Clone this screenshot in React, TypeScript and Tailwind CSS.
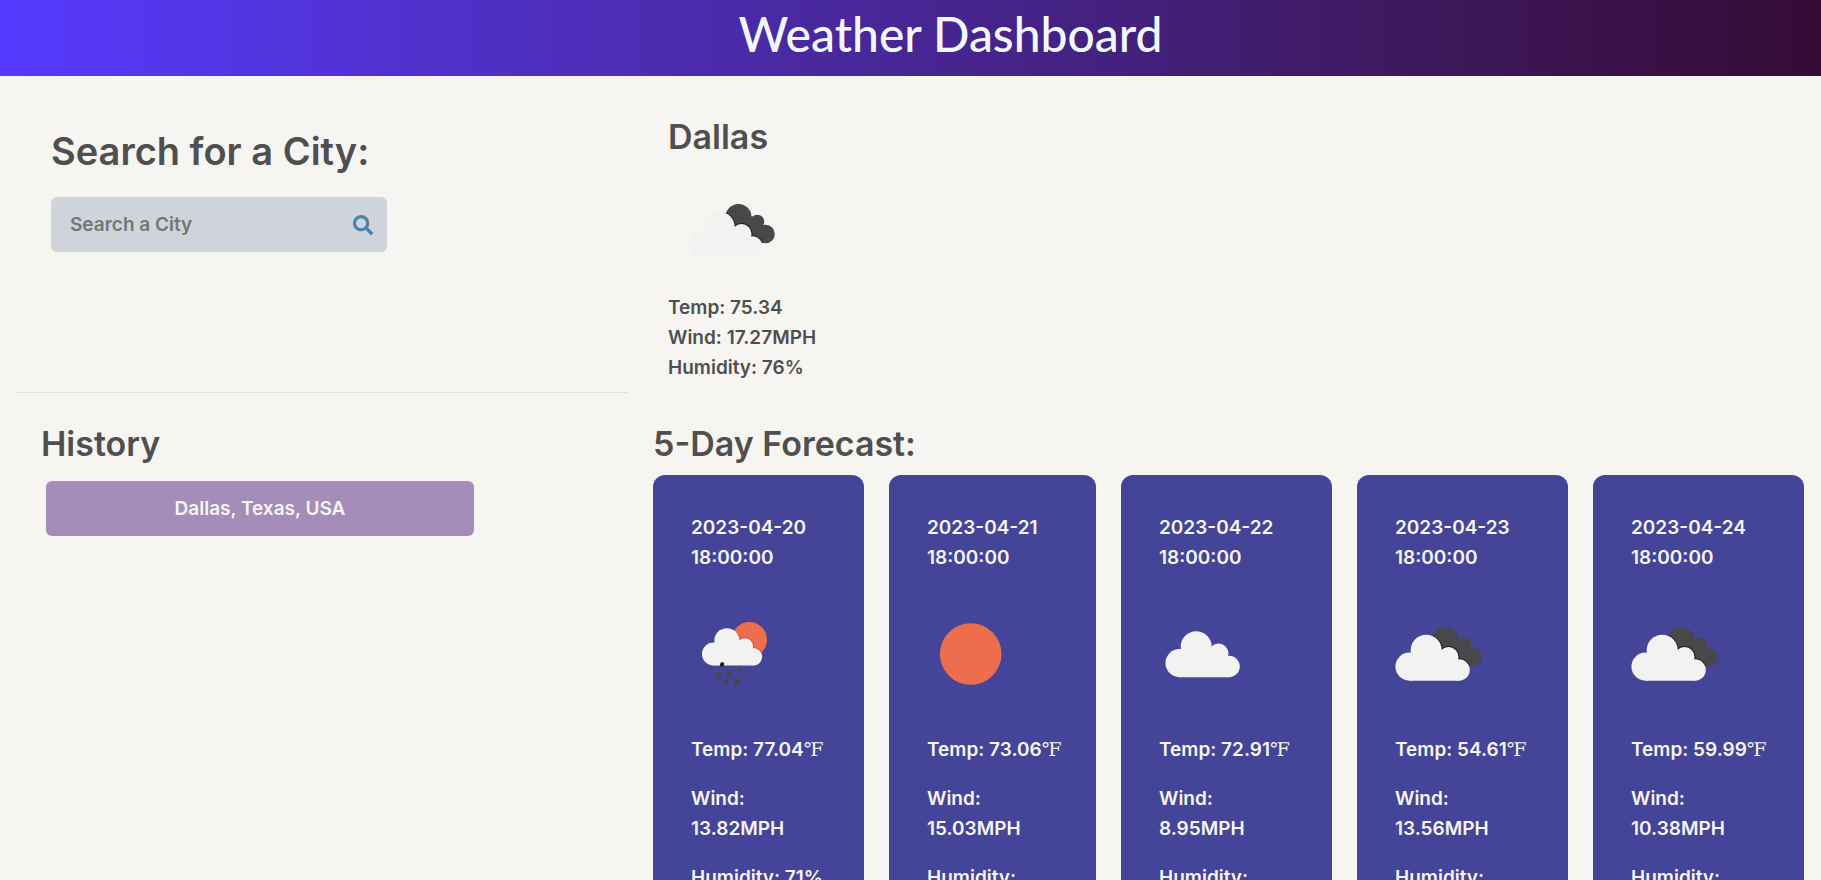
import { FaSearch } from "react-icons/fa";

type Sky = "rain" | "clear" | "cloud" | "broken";

interface Day {
  date: string;
  time: string;
  sky: Sky;
  temp: string;
  wind: string;
  humidity: string;
}

const DAYS: Day[] = [
  { date: "2023-04-20", time: "18:00:00", sky: "rain", temp: "77.04", wind: "13.82MPH", humidity: "71%" },
  { date: "2023-04-21", time: "18:00:00", sky: "clear", temp: "73.06", wind: "15.03MPH", humidity: "28%" },
  { date: "2023-04-22", time: "18:00:00", sky: "cloud", temp: "72.91", wind: "8.95MPH", humidity: "46%" },
  { date: "2023-04-23", time: "18:00:00", sky: "broken", temp: "54.61", wind: "13.56MPH", humidity: "40%" },
  { date: "2023-04-24", time: "18:00:00", sky: "broken", temp: "59.99", wind: "10.38MPH", humidity: "58%" },
];

function CloudShape() {
  return (
    <>
      <circle cx="31.2" cy="58.2" r="15.5" />
      <circle cx="14.5" cy="74.6" r="14.1" />
      <circle cx="53.5" cy="65" r="10" />
      <circle cx="64.1" cy="78" r="10.7" />
      <path d="M14.5 88.7V62H30l24 2 10 14v10.7z" />
    </>
  );
}

function BackCloudShape() {
  return (
    <>
      <circle cx="50.5" cy="48" r="13" />
      <circle cx="69.3" cy="52.7" r="7" />
      <circle cx="77.6" cy="65" r="9.2" />
      <path d="M42 56l18-9 9 1 9 15-3 11H58z" />
    </>
  );
}

function SkyIcon({ sky, id }: { sky: Sky; id: string }) {
  return (
    <svg viewBox="0 0 88 124" className="block h-[124px] w-[88px]" aria-hidden="true">
      {sky === "broken" && (
        <>
          <clipPath id={id}>
            <BackCloudShape />
          </clipPath>
          <g fill="#48484a">
            <BackCloudShape />
          </g>
          <g clipPath={`url(#${id})`} fill="#222224" stroke="#222224" strokeWidth="2">
            <CloudShape />
          </g>
          <g fill="#f2f2f1">
            <CloudShape />
          </g>
        </>
      )}
      {sky === "cloud" && (
        <g fill="#f2f2f1" transform="translate(6 -3.5)">
          <CloudShape />
        </g>
      )}
      {sky === "clear" && <circle cx="43.7" cy="62" r="30.8" fill="#ec6e4c" />}
      {sky === "rain" && (
        <>
          <clipPath id={id}>
            <circle cx="58.3" cy="47.7" r="17.7" />
          </clipPath>
          <circle cx="58.3" cy="47.7" r="17.7" fill="#ec6e4c" />
          <g clipPath={`url(#${id})`}>
            <g transform="translate(10.6 1.6) scale(.81)" fill="#e8452a" stroke="#e8452a" strokeWidth="2">
              <CloudShape />
            </g>
          </g>
          <g transform="translate(10.6 1.6) scale(.81)" fill="#f2f2f1">
            <CloudShape />
          </g>
          <g stroke="#48484a" strokeWidth="4" strokeLinecap="round">
            <path d="M31.3 72l-.4 1" stroke="#222224" />
            <path d="M28.1 81.3l-1.6 3.4" />
            <path d="M38.8 80l-1.6 3.4" />
            <path d="M49.9 77.6l-.4 1" />
            <path d="M35.2 89.2l-.4 1" />
            <path d="M46.4 88.1l-1.4 3" />
          </g>
        </>
      )}
    </svg>
  );
}

function ForecastCard({ day }: { day: Day }) {
  return (
    <article className="flex min-w-0 flex-col gap-[19px] rounded-xl bg-[#444498] p-[38px] text-[#f6f5f1]">
      <h3>
        {day.date}
        <br />
        {day.time}
      </h3>
      <SkyIcon sky={day.sky} id={`sky-${day.date}`} />
      <p className="whitespace-nowrap">
        Temp: {day.temp}
        <span className="font-['Liberation_Serif','DejaVu_Serif',serif] font-normal leading-none">℉</span>
      </p>
      <p>
        Wind:
        <br />
        {day.wind}
      </p>
      <p>Humidity: {day.humidity}</p>
    </article>
  );
}

export default function App() {
  return (
    <div className="h-screen overflow-hidden bg-[#f6f5f1] font-['Inter',sans-serif] text-[19px] leading-[30px] font-semibold text-[#4f4f4f]">
      <header className="flex h-[76px] justify-center bg-linear-to-r from-[#563aff] to-[#350a35] pl-20">
        <h1 className="font-['Lato',sans-serif] text-5xl leading-[68px] font-medium text-[#f0f8ff]">
          Weather Dashboard
        </h1>
      </header>

      <main className="grid grid-cols-[628fr_1151fr] gap-x-[25px] pr-[17px]">
        <section className="ml-[15px] flex h-[317px] flex-col items-start border-b border-[#dee2e6] pt-[51px] pl-9">
          <label htmlFor="city" className="text-[38px] leading-[48px]">
            Search for a City:
          </label>
          <form
            className="mt-[22px] flex h-[55px] w-[336px] items-center rounded-md bg-[#ced4da] pr-[14px] pl-[19px]"
            onSubmit={(e) => e.preventDefault()}
          >
            <input
              id="city"
              type="text"
              placeholder="Search a City"
              className="min-w-0 flex-1 bg-transparent outline-none placeholder:text-[#757575]"
            />
            <button type="submit" aria-label="Search" className="text-[#4a80aa]">
              <FaSearch className="size-5" />
            </button>
          </form>
        </section>

        <section className="pt-[41px] pl-[15px]">
          <h2 className="text-[34px] leading-10">Dallas</h2>
          <div className="mt-3 ml-5">
            <SkyIcon sky="broken" id="sky-now" />
          </div>
          <p>Temp: 75.34</p>
          <p>Wind: 17.27MPH</p>
          <p>Humidity: 76%</p>
        </section>

        <section className="flex flex-col items-start pt-[31px] pl-[41px]">
          <h2 className="text-[34px] leading-10">History</h2>
          <button type="button" className="mt-[17px] ml-[5px] h-[55px] w-[428px] rounded-md bg-[#a48db9] text-[#f6f5f1]">
            Dallas, Texas, USA
          </button>
        </section>

        <section className="pt-[31px]">
          <h2 className="text-[34px] leading-10">5-Day Forecast:</h2>
          <div className="mt-[11px] grid grid-cols-[211fr_207fr_211fr_211fr_211fr] gap-[25px]">
            {DAYS.map((day) => (
              <ForecastCard key={day.date} day={day} />
            ))}
          </div>
        </section>
      </main>
    </div>
  );
}
